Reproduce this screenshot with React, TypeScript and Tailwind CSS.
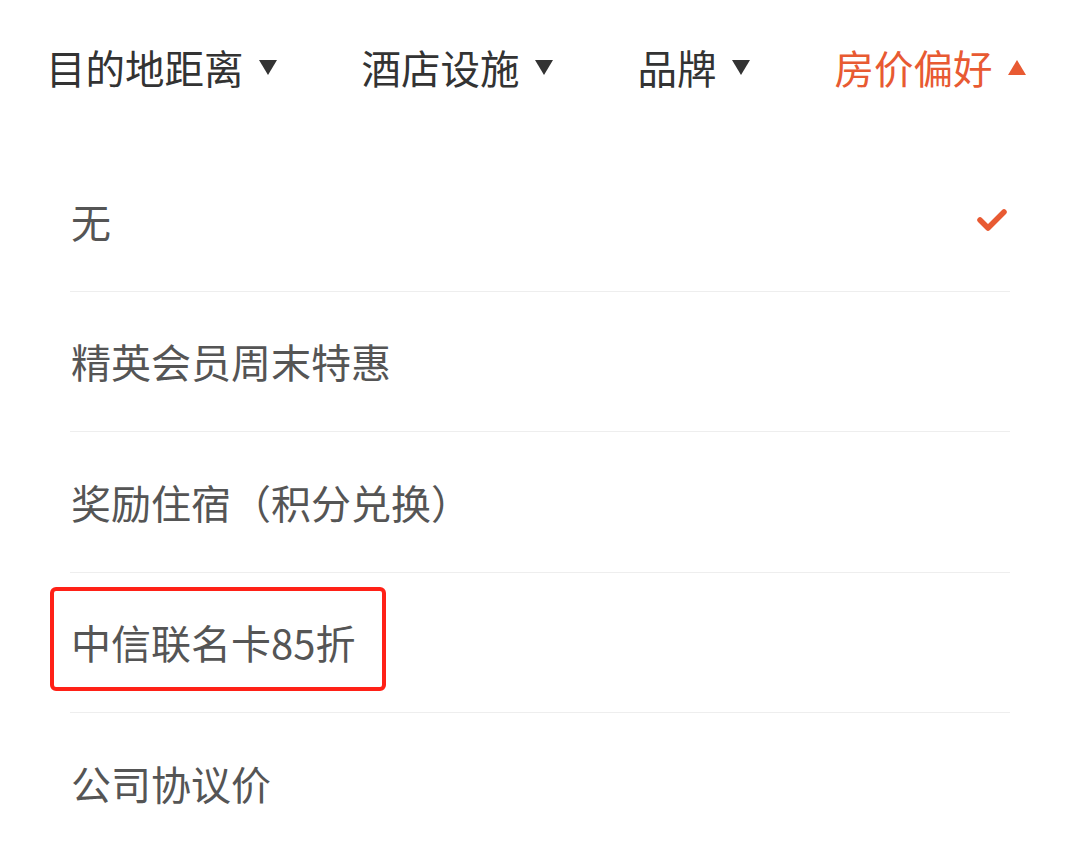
import React from "react";

const tabs = [
  { label: "目的地距离", active: false },
  { label: "酒店设施", active: false },
  { label: "品牌", active: false },
  { label: "房价偏好", active: true },
];

const items = ["无", "精英会员周末特惠", "奖励住宿（积分兑换）", "中信联名卡85折", "公司协议价"];

function Tri({ up, color }: { up: boolean; color: string }) {
  return (
    <svg width="18" height="15" viewBox="0 0 18 15" className="ml-[15px] shrink-0">
      {up ? <polygon points="9,0 18,15 0,15" fill={color} /> : <polygon points="0,0 18,0 9,15" fill={color} />}
    </svg>
  );
}

export default function App() {
  return (
    <div
      className="w-[1080px] h-[850px] bg-white overflow-hidden"
      style={{ fontFamily: '"Noto Sans CJK SC", "Noto Sans", sans-serif' }}
    >
      <div className="h-[134px] flex items-center pl-[46px] gap-[85px]">
        {tabs.map((t) => (
          <div key={t.label} className="flex items-center">
            <span
              className={`text-[39.5px] leading-none ${t.active ? "text-[#e85a32]" : "text-[#333333]"}`}
            >
              {t.label}
            </span>
            <Tri up={t.active} color={t.active ? "#e85a32" : "#333333"} />
          </div>
        ))}
      </div>
      <div className="mt-[17px] ml-[70px] w-[940px]">
        {items.map((it, i) => (
          <div
            key={it}
            className={`relative h-[140.5px] flex items-center justify-between pl-[1px] ${
              i < items.length - 1 ? "border-b border-[#eeeeee]" : ""
            }`}
          >
            <span className="text-[40px] leading-none text-[#555555]">{it}</span>
            {i === 0 && (
              <svg width="32" height="25" viewBox="0 0 32 25" className="mr-[2px]">
                <polyline
                  points="4,12 12,20 28,4"
                  fill="none"
                  stroke="#e85a32"
                  strokeWidth="5.5"
                  strokeLinecap="round"
                  strokeLinejoin="round"
                />
              </svg>
            )}
            {i === 3 && (
              <div className="absolute left-[-20px] top-[14px] w-[336px] h-[104px] border-[4px] border-[#ff2117] rounded-[6px]" />
            )}
          </div>
        ))}
      </div>
    </div>
  );
}
